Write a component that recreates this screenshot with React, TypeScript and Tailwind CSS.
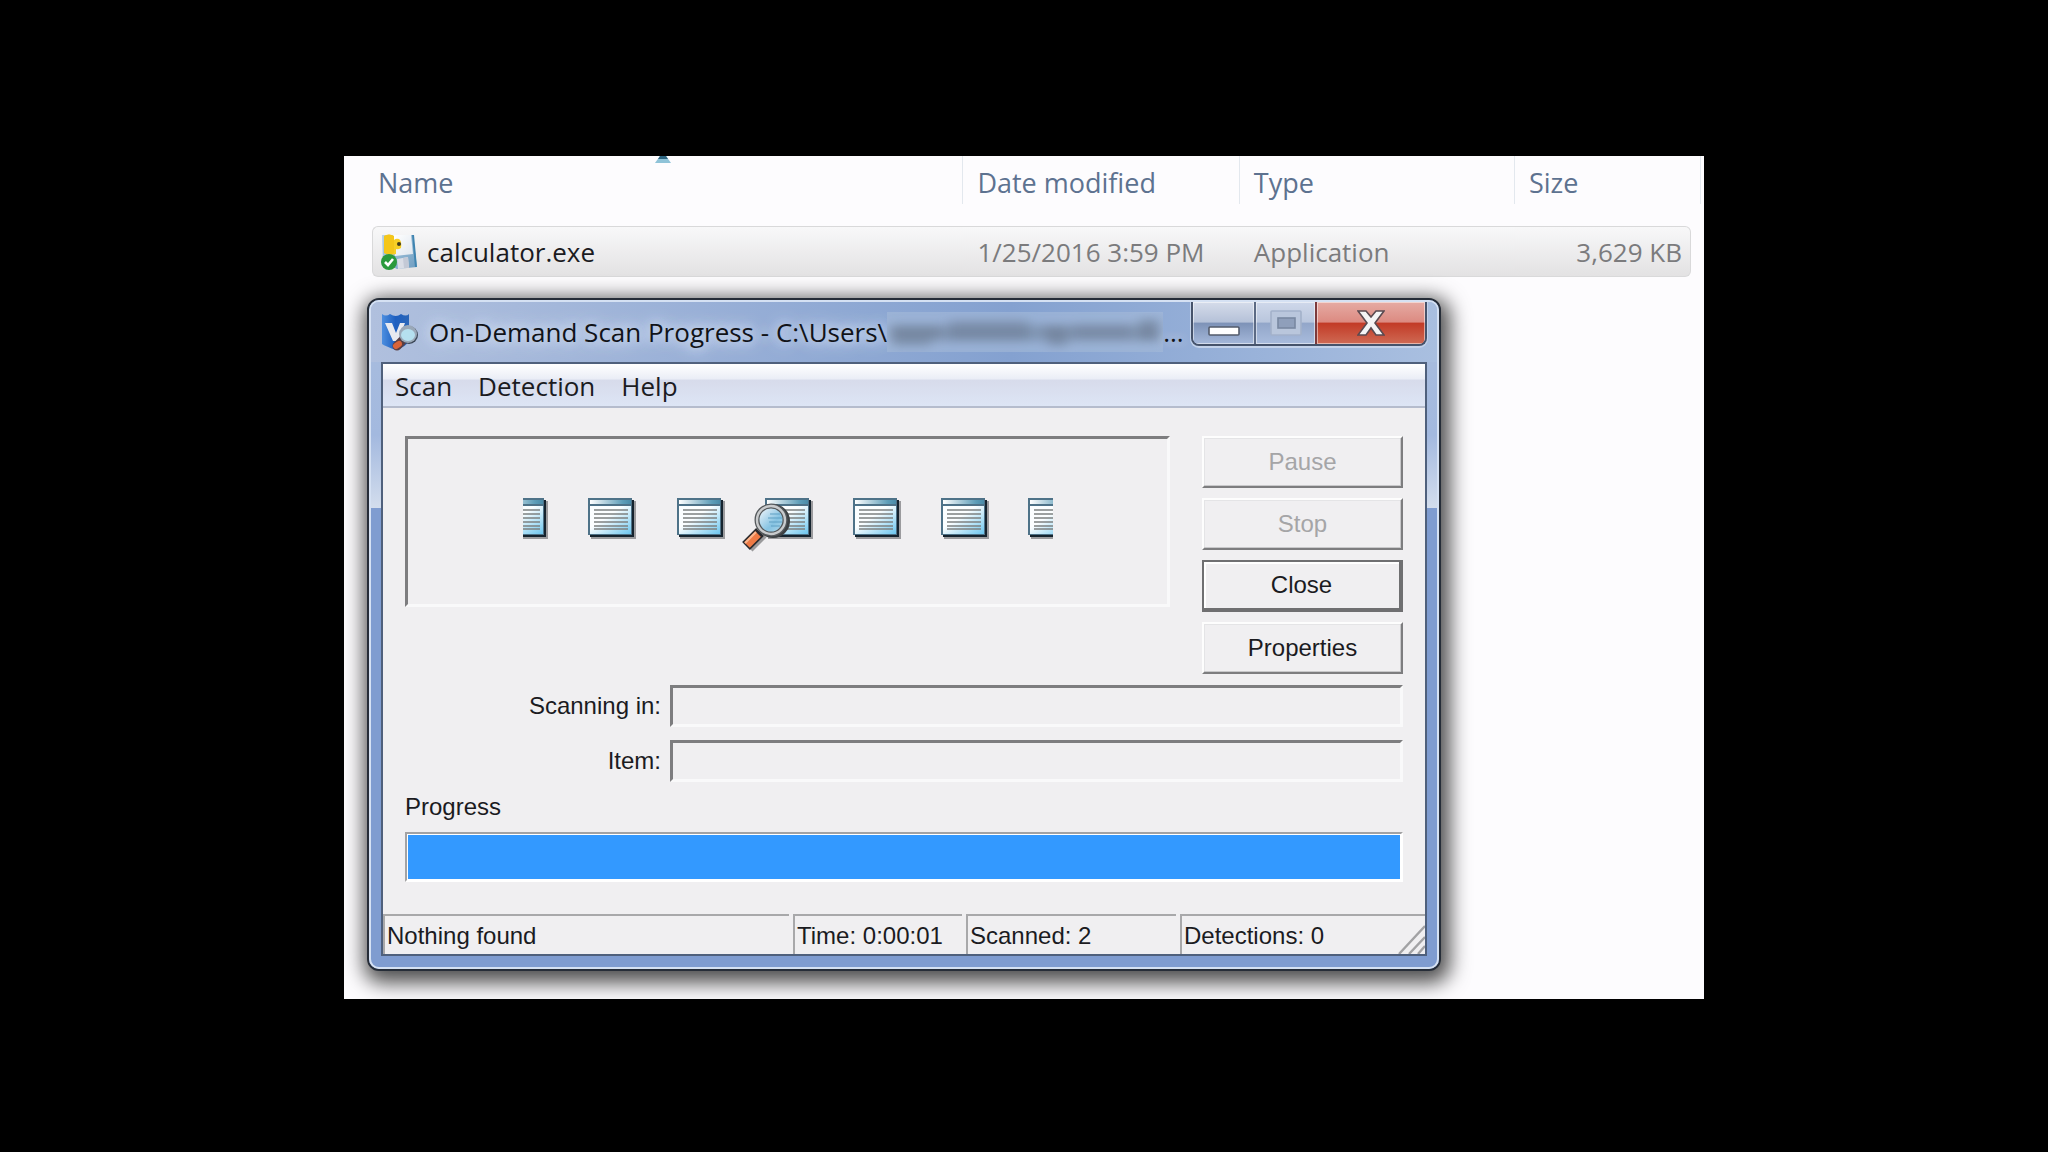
import { useState } from 'react';

interface FileEntry {
    name: string;
    modified: string;
    type: string;
    size: string;
}

const files: FileEntry[] = [
    { name: 'calculator.exe', modified: '1/25/2016 3:59 PM', type: 'Application', size: '3,629 KB' },
];

const menus = ['Scan', 'Detection', 'Help'];

const InstallerIcon = () => (
    <svg viewBox="0 0 36 36" className="h-9 w-9 shrink-0" aria-hidden="true">
        <defs>
            <linearGradient id="boxSide" x1="0" y1="0" x2="1" y2="1">
                <stop offset="0" stopColor="#b9d3e6" />
                <stop offset="1" stopColor="#6d9cc0" />
            </linearGradient>
            <linearGradient id="boxFront" x1="0" y1="0" x2="1" y2="1">
                <stop offset="0" stopColor="#ffffff" />
                <stop offset="1" stopColor="#dfe6ee" />
            </linearGradient>
        </defs>
        <path d="M1 1H32L36 33L16 35L2 28Z" fill="url(#boxSide)" />
        <path d="M12 1H30L32 20L14 22Z" fill="url(#boxFront)" />
        <path d="M31 1H33L36 33L34 33Z" fill="#3f84b0" />
        <path d="M16 25L27 23L28 34L17 35Z" fill="#d9dde6" />
        <path d="M22 24L27 23L28 34L23 34Z" fill="#c3c9d6" />
        <path d="M3 2Q8 -1 13 2V6Q15 4 18 5Q21 7 20 14Q17 16 15 15V20Q9 22 3 19Z" fill="#f7cf26" />
        <path d="M3 2Q8 -1 13 2V19Q8 22 3 19Z" fill="#f2bf12" opacity="0.6" />
        <circle cx="18" cy="10" r="2" fill="#3f3a1c" />
        <circle cx="8" cy="28" r="8" fill="#2a9a3c" />
        <path d="M4 28L7 31L12 25" fill="none" stroke="#fff" strokeWidth="2.6" />
    </svg>
);

const ScannerIcon = () => (
    <svg viewBox="0 0 38 38" className="h-[38px] w-[38px] shrink-0" aria-hidden="true">
        <defs>
            <linearGradient id="shield" x1="0" y1="0" x2="1" y2="0">
                <stop offset="0" stopColor="#4d8fe0" />
                <stop offset="0.5" stopColor="#1e5fc0" />
                <stop offset="1" stopColor="#2b66b8" />
            </linearGradient>
        </defs>
        <path d="M1 1Q5 4 9 1Q15 5 20 1Q25 4 28 1V28Q26 33 15 37Q4 33 1 31Z" fill="url(#shield)" />
        <path d="M4 10H11L15 20L19 10H24L17 28H12Z" fill="#e8eaf0" />
        <path d="M21 28L16 33" stroke="#5a3f44" strokeWidth="9" strokeLinecap="round" />
        <path d="M18 31L15 33" stroke="#d8643a" strokeWidth="6" strokeLinecap="round" />
        <circle cx="28" cy="22" r="9" fill="#3b4757" />
        <circle cx="27" cy="21" r="9" fill="#9aa8b8" />
        <ellipse cx="27" cy="22" rx="7" ry="6" fill="#b5e0ef" />
    </svg>
);

const Sheet = ({ x }: { x: number }) => (
    <g transform={`translate(${x} 0)`}>
        <path d="M3 3H48V41H3Z" fill="#9b9b9e" />
        <path d="M2 2H46V39H2Z" fill="#15232e" />
        <path d="M0 0H44V37H0Z" fill="#4e7288" />
        <path d="M2 2H43V6H2Z" fill="url(#sheetTitle)" />
        <path d="M2 8H43V36H2Z" fill="url(#sheetBody)" />
        {[12, 16, 20, 24, 28, 31].map((y) => (
            <path key={y} d={`M6 ${y}H40`} stroke="#7c8080" strokeWidth="1.4" />
        ))}
    </g>
);

const ScanStrip = () => (
    <svg viewBox="0 0 530 56" className="h-14 w-[530px] max-w-full" role="img" aria-label="Scanning files">
        <defs>
            <linearGradient id="sheetTitle" x1="0" y1="0" x2="1" y2="0">
                <stop offset="0" stopColor="#ffffff" />
                <stop offset="0.8" stopColor="#5d9db8" />
                <stop offset="1" stopColor="#4a8ba8" />
            </linearGradient>
            <linearGradient id="sheetBody" x1="0" y1="0" x2="1" y2="1">
                <stop offset="0.4" stopColor="#fbfeff" />
                <stop offset="1" stopColor="#6cc6ef" />
            </linearGradient>
            <linearGradient id="lens" x1="0" y1="0" x2="1" y2="1">
                <stop offset="0.1" stopColor="#eef4fa" />
                <stop offset="0.6" stopColor="#86c3e2" />
                <stop offset="1" stopColor="#b9dcec" />
            </linearGradient>
        </defs>
        {[-23, 65, 154, 242, 330, 418, 505].map((x) => (
            <Sheet key={x} x={x} />
        ))}
        <path d="M240 36L226 50" stroke="#9a9a9c" strokeWidth="10" />
        <path d="M237 34L223 48" stroke="#2a2a2e" strokeWidth="11" />
        <path d="M235 36L224 47" stroke="#ee7a45" strokeWidth="8" />
        <path d="M233 34L222 45" stroke="#f9b68f" strokeWidth="2" />
        <circle cx="250" cy="23" r="15" fill="none" stroke="#3c4043" strokeWidth="4" />
        <circle cx="248" cy="22" r="14" fill="url(#lens)" stroke="#55595c" strokeWidth="5" />
        <circle cx="248" cy="22" r="14" fill="none" stroke="#c9cbcd" strokeWidth="2.4" />
        <path d="M247 16H257M245 20H259M246 24H259M248 28H257" stroke="#5fa0c4" strokeWidth="1.2" />
    </svg>
);

const FileList = () => (
    <table className="w-full table-fixed border-separate border-spacing-0 text-left text-[26px] leading-9 text-[#7b7b7d]">
        <thead>
            <tr className="text-[27px] text-[#5d7290]">
                <th className="relative h-12 w-[44.5%] border-r border-[#e3e8ee] p-0 pt-1.5 pl-1.5 font-normal">
                    Name
                    <svg viewBox="0 0 16 7" className="absolute top-0 left-[283px] h-[7px] w-4" aria-hidden="true">
                        <path d="M5 0H11L16 7H0Z" fill="#8fc3d8" />
                        <path d="M5 0H11L13 3H3Z" fill="#2c6480" />
                    </svg>
                </th>
                <th className="w-[20.8%] border-r border-[#e3e8ee] p-0 pt-1.5 pl-3.5 font-normal">Date modified</th>
                <th className="w-[20.7%] border-r border-[#e3e8ee] p-0 pt-1.5 pl-3.5 font-normal">Type</th>
                <th className="p-0 pt-1.5 pl-3.5 font-normal">Size</th>
                <th className="w-2.5 border-r border-[#e3e8ee] p-0" aria-hidden="true"></th>
            </tr>
            <tr aria-hidden="true">
                <td className="h-[22px] p-0" colSpan={5}></td>
            </tr>
        </thead>
        <tbody>
            {files.map((file) => (
                <tr key={file.name}>
                    <td className="h-[51px] rounded-l-md border-y border-l border-[#d9d9da] bg-linear-to-b from-[#f8f8f9] to-[#e3e2e3] p-0 pl-2 text-[#1b1b1f]">
                        <div className="flex items-center gap-2.5">
                            <InstallerIcon />
                            {file.name}
                        </div>
                    </td>
                    <td className="border-y border-[#d9d9da] bg-linear-to-b from-[#f8f8f9] to-[#e3e2e3] p-0 pl-3.5">{file.modified}</td>
                    <td className="border-y border-[#d9d9da] bg-linear-to-b from-[#f8f8f9] to-[#e3e2e3] p-0 pl-3.5">{file.type}</td>
                    <td className="rounded-r-md border-y border-r border-[#d9d9da] bg-linear-to-b from-[#f8f8f9] to-[#e3e2e3] p-0 pr-2 text-right">{file.size}</td>
                </tr>
            ))}
        </tbody>
    </table>
);

const CaptionButtons = () => (
    <div className="flex h-11 w-[236px] shrink-0 overflow-hidden rounded-b-lg border-2 border-t-0 border-[#46536b] shadow-[0_1px_0_1px_#c3d2ea]">
        <button
            aria-label="Minimize"
            className="flex w-[63px] items-end justify-center border-r-2 border-[#5c6a84] bg-[linear-gradient(#d5dcea,#b5c1d8_48%,#7d92b7_50%,#a5b8da)] pb-2 shadow-[inset_0_0_0_1px_#ffffff80]"
        >
            <svg viewBox="0 0 32 10" className="h-2.5 w-8" aria-hidden="true">
                <rect x="1" y="1" width="30" height="8" rx="1" fill="#fff" stroke="#535b6b" strokeWidth="1.6" />
            </svg>
        </button>
        <button
            aria-label="Maximize"
            disabled
            className="flex w-[61px] items-center justify-center border-r-2 border-[#7c3a3c] bg-[linear-gradient(#cfd8ea,#b9c6dd_48%,#92a6c9_50%,#a9bcdd)] shadow-[inset_0_0_0_1px_#ffffff80]"
        >
            <svg viewBox="0 0 32 26" className="h-[26px] w-8" aria-hidden="true">
                <rect x="1" y="1" width="30" height="24" rx="1" fill="#b9c6dc" stroke="#a3b1ca" strokeWidth="1.6" />
                <rect x="8" y="8" width="17" height="10" fill="#8f9fbb" stroke="#7888a2" strokeWidth="1.6" />
            </svg>
        </button>
        <button
            aria-label="Close window"
            className="flex flex-1 items-center justify-center bg-[linear-gradient(#e6aba4,#dc8a81_48%,#c23a26_50%,#cf6a54)] shadow-[inset_0_0_0_1px_#ffffff80]"
        >
            <svg viewBox="0 0 28 26" className="h-[26px] w-7" aria-hidden="true">
                <path d="M1 1H9L14 7L19 1H27L18 13L27 25H19L14 18L9 25H1L10 13Z" fill="#f4f4f5" stroke="#5a4a50" strokeWidth="1.6" />
            </svg>
        </button>
    </div>
);

// Folder names of the path, smeared so that they can't be read
const HiddenPath = () => (
    <svg viewBox="0 0 276 40" className="h-10 w-[276px] shrink" preserveAspectRatio="none" aria-hidden="true">
        <defs>
            <filter id="smear" x="-5%" y="-20%" width="110%" height="140%">
                <feGaussianBlur stdDeviation="6 5" />
            </filter>
        </defs>
        <rect width="276" height="40" fill="#a5bad9" opacity="0.6" />
        <g filter="url(#smear)" fill="#66758c">
            <path d="M2 13H272V29H2Z" opacity="0.45" />
            <path d="M6 14H54V26H44V34H6Z" opacity="0.45" />
            <path d="M62 8H142V28H62Z" opacity="0.4" />
            <path d="M156 14H180V34H162Z" opacity="0.5" />
            <path d="M186 12H244V27H186Z" opacity="0.35" />
            <path d="M252 7H272V28H252Z" opacity="0.5" />
        </g>
    </svg>
);

const raised = 'border-2 border-t-[#fdfdfd] border-l-[#fdfdfd] border-r-[#7d7d7f] border-b-[#7d7d7f] shadow-[inset_-1px_-1px_0_#c8c8ca,inset_1px_1px_0_#e4e4e6]';
const sunken = 'border-[3px] border-t-[#7d7d7f] border-l-[#7d7d7f] border-r-[#f9f9fa] border-b-[#f9f9fa]';
const cell = 'h-10 border-t-2 border-l-2 border-[#a8a8aa] pt-1.5 pl-0.5 whitespace-nowrap';

const ScanWindow = () => {
    const [progress] = useState(100);

    return (
        <section className="w-full max-w-[1074px] rounded-[12px] border-2 border-[#262d38] bg-[#7f9cd0] shadow-[3px_6px_20px_6px_#000000b0]">
            <div className="rounded-[10px] border-2 border-[#d5e1f3] bg-[linear-gradient(#a9bddd,#a3b9df_20%,#d3dded_31%,#7f9cd0_31%)] px-2.5 pb-[11px]">
                <header className="-mx-2.5 flex h-[60px] items-start rounded-t-lg bg-linear-to-r from-[#b0c0de] from-0% via-[#84a1d0] via-60% to-[#a9bfe0] px-2.5">
                    <div className="flex min-w-0 flex-1 items-center gap-2.5 pt-2.5">
                        <ScannerIcon />
                        <h1 className="flex min-w-0 items-center text-[26px] leading-10 whitespace-nowrap text-[#111318] [text-shadow:0_0_10px_#d3dff2,0_0_16px_#d3dff2,0_0_20px_#d3dff2]">
                            On-Demand Scan Progress - C:\Users\
                            <HiddenPath />
                            ...
                        </h1>
                    </div>
                    <CaptionButtons />
                </header>

                <div className="border-2 border-[#4f607c] bg-[#f0eff1]">
                    <nav className="flex h-11 items-center gap-[26px] border-b-2 border-[#b5bccd] bg-[linear-gradient(#ffffff,#eaedf6_36%,#d7dbeb_38%,#dde5f5)] px-3 pt-0.5 text-[26px] leading-9 text-[#1b1b1f]">
                        {menus.map((menu) => (
                            <button key={menu}>{menu}</button>
                        ))}
                    </nav>

                    <div className="font-['Liberation_Sans',Arial,sans-serif] text-2xl leading-7 text-[#1b1b1f]">
                        <div className="flex flex-col gap-[11px] px-[22px] pt-7 pb-8">
                            <div className="flex gap-8">
                                <div className={`flex h-[171px] min-w-0 flex-1 items-center justify-center pt-2 ${sunken}`}>
                                    <ScanStrip />
                                </div>
                                <div className="flex w-[201px] flex-col gap-2.5">
                                    <button disabled className={`h-[52px] text-[#a5a5a7] ${raised}`}>Pause</button>
                                    <button disabled className={`h-[52px] text-[#a5a5a7] ${raised}`}>Stop</button>
                                    <button className="h-[52px] border-2 border-r-4 border-b-4 border-[#6f6f71] shadow-[inset_2px_2px_0_#fff]">Close</button>
                                    <button className={`h-[52px] ${raised}`}>Properties</button>
                                </div>
                            </div>

                            <div className="grid grid-cols-[256px_1fr] items-center gap-x-[9px] gap-y-[13px] text-right">
                                <label htmlFor="scanning-in">Scanning in:</label>
                                <input id="scanning-in" readOnly className={`h-[42px] w-full px-2 outline-none ${sunken}`} />
                                <label htmlFor="item">Item:</label>
                                <input id="item" readOnly className={`h-[42px] w-full px-2 outline-none ${sunken}`} />
                            </div>

                            <p id="progress-label">Progress</p>
                            <div
                                role="progressbar"
                                aria-labelledby="progress-label"
                                aria-valuenow={progress}
                                className="h-[50px] border-2 border-t-[#a2a2a4] border-l-[#a2a2a4] border-r-white border-b-white bg-white p-px"
                            >
                                <div className="h-full bg-[#3399ff]" style={{ width: `${progress}%` }}></div>
                            </div>
                        </div>

                        <footer className="flex gap-1">
                            <div className={`min-w-0 flex-1 ${cell}`}>Nothing found</div>
                            <div className={`w-[169px] ${cell}`}>Time: 0:00:01</div>
                            <div className={`w-[210px] ${cell}`}>Scanned: 2</div>
                            <div className={`flex w-[245px] items-end justify-between ${cell}`}>
                                <span className="self-start">Detections: 0</span>
                                <svg viewBox="0 0 28 30" className="h-[30px] w-7" aria-hidden="true">
                                    <path d="M2 30L28 2M12 30L28 13M21 30L28 22" stroke="#a2a2a4" strokeWidth="2.4" />
                                </svg>
                            </div>
                        </footer>
                    </div>
                </div>
            </div>
        </section>
    );
};

const App = () => (
    <main className="flex min-h-screen items-start justify-center bg-black py-[156px] font-['Open_Sans','Segoe_UI',sans-serif]">
        <div className="w-full max-w-[1360px] overflow-hidden bg-[#fdfcfe]">
            <div className="pr-[3px] pl-7">
                <FileList />
            </div>
            <div className="px-[23px] pt-[21px] pb-7">
                <ScanWindow />
            </div>
        </div>
    </main>
);

export default App;
